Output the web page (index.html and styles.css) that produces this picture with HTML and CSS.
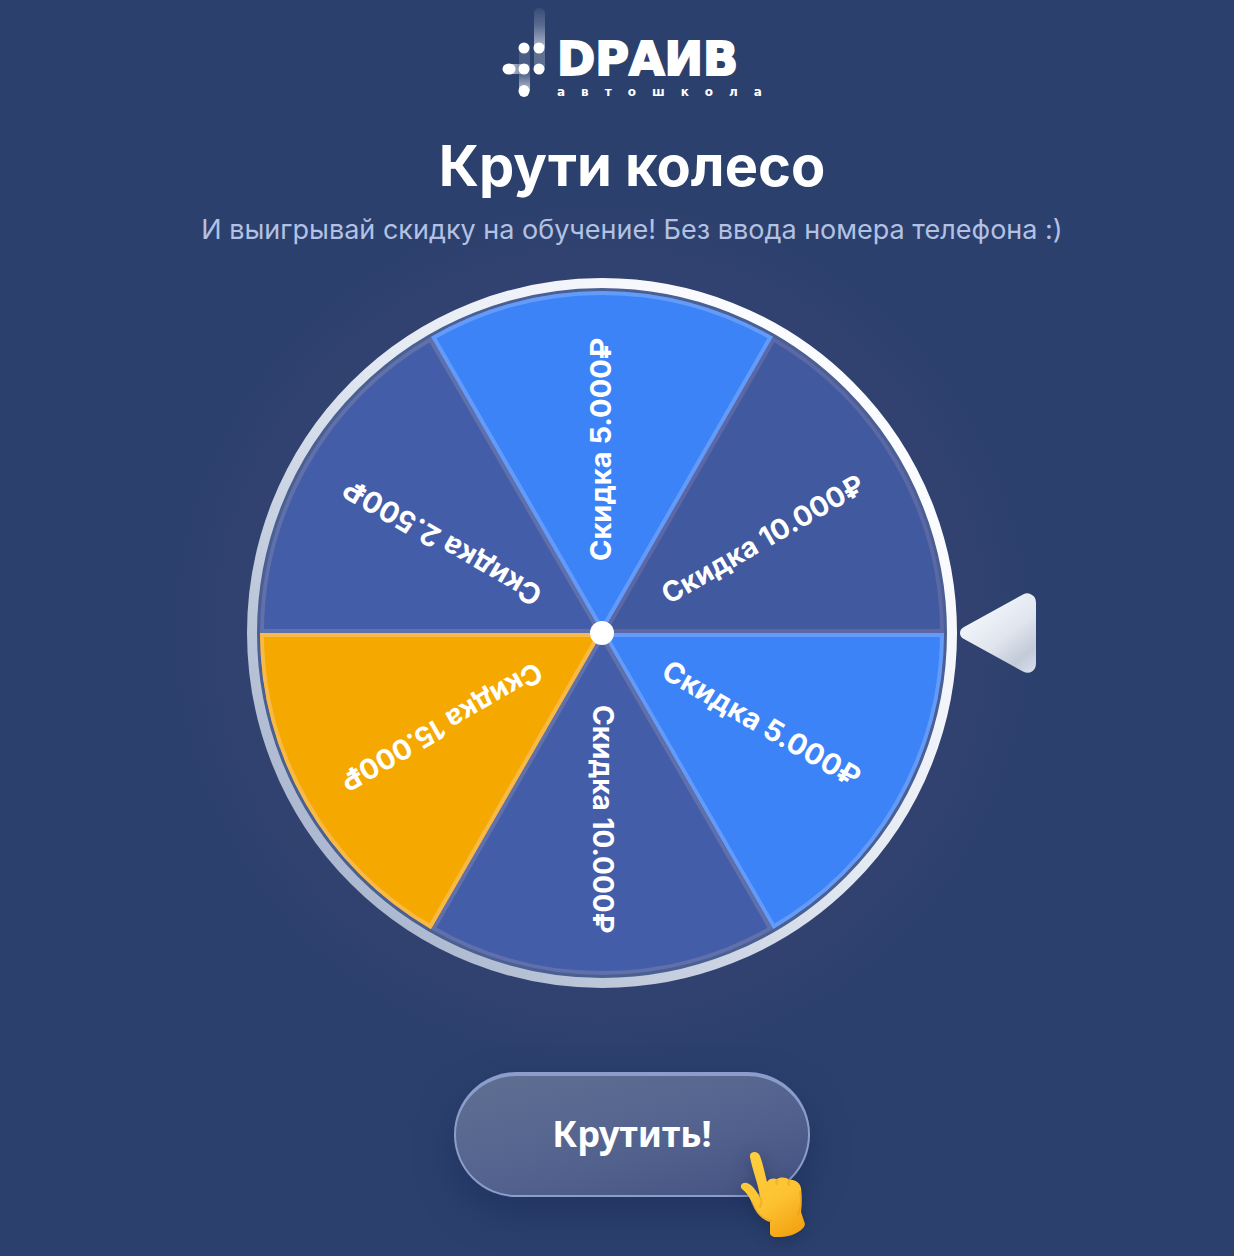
FILE: index.html
```html
<!DOCTYPE html>
<html lang="ru">
<head>
  <meta charset="UTF-8">
  <meta name="viewport" content="width=device-width, initial-scale=1">
  <title>Крути колесо</title>
  <link rel="stylesheet" href="styles.css">
</head>
<body>
  <main class="page">
    <header class="logo">
      <svg class="logo-mark" viewBox="0 0 44 90" width="44" height="90" aria-hidden="true">
        <defs>
          <linearGradient id="trail" x1="0" y1="0" x2="0" y2="1">
            <stop offset="0" stop-color="#fff" stop-opacity="0.06"/>
            <stop offset="0.4" stop-color="#dfe3f5" stop-opacity="0.25"/>
            <stop offset="1" stop-color="#fff" stop-opacity="0.7"/>
          </linearGradient>
          <linearGradient id="trail-side" x1="0" y1="0" x2="1" y2="0">
            <stop offset="0" stop-color="#fff" stop-opacity="0.7"/>
            <stop offset="1" stop-color="#fff" stop-opacity="0.15"/>
          </linearGradient>
        </defs>
        <rect x="32" y="0" width="11" height="42" rx="5" fill="url(#trail)"/>
        <rect x="32" y="38" width="11" height="24" fill="#fff" fill-opacity="0.25"/>
        <rect x="17" y="38" width="11" height="24" fill="#fff" fill-opacity="0.15"/>
        <rect x="17" y="56" width="11" height="27" fill="url(#trail)"/>
        <rect x="8" y="56" width="18" height="10" fill="url(#trail-side)"/>
        <g fill="#fff">
          <circle cx="22" cy="40" r="5.5"/>
          <circle cx="37" cy="40" r="5.5"/>
          <ellipse cx="7" cy="61" rx="6.5" ry="5.5"/>
          <circle cx="22" cy="61" r="5.5"/>
          <circle cx="37" cy="61" r="5.5"/>
          <ellipse cx="22" cy="83" rx="5.5" ry="6"/>
        </g>
      </svg>
      <div class="logo-text">
        <span class="logo-name">DРАИВ</span>
        <span class="logo-sub">автошкола</span>
      </div>
    </header>

    <h1 class="title">Крути колесо</h1>
    <p class="subtitle">И выигрывай скидку на обучение! Без ввода номера телефона :)</p>

    <div class="stage">
      <svg class="wheel" viewBox="-355 -355 710 710">
        <defs>
          <linearGradient id="rim" x1="0.85" y1="0.2" x2="0.15" y2="0.85">
            <stop offset="0" stop-color="#fbfcff"/>
            <stop offset="0.45" stop-color="#e3e9f2"/>
            <stop offset="1" stop-color="#adb9d0"/>
          </linearGradient>
          <!-- one sector, 60 degrees, pointing right -->
          <path id="sector" d="M0 0 L296.2 -171 A342 342 0 0 1 296.2 171 Z"/>
          <clipPath id="sector-clip"><use href="#sector"/></clipPath>
        </defs>
        <circle r="347" fill="#4a5f92"/>
        <circle r="350" fill="none" stroke="url(#rim)" stroke-width="10"/>
        <g transform="rotate(-30)">
          <use href="#sector" class="sector sector-navy-dark" clip-path="url(#sector-clip)"/>
          <text class="prize prize-long" x="72" y="9">Скидка 10.000₽</text>
        </g>
        <g transform="rotate(30)">
          <use href="#sector" class="sector sector-blue" clip-path="url(#sector-clip)"/>
          <text class="prize" x="72" y="9">Скидка 5.000₽</text>
        </g>
        <g transform="rotate(90)">
          <use href="#sector" class="sector sector-navy" clip-path="url(#sector-clip)"/>
          <text class="prize prize-long" x="72" y="9">Скидка 10.000₽</text>
        </g>
        <g transform="rotate(150)">
          <use href="#sector" class="sector sector-orange" clip-path="url(#sector-clip)"/>
          <text class="prize prize-long" x="72" y="9">Скидка 15.000₽</text>
        </g>
        <g transform="rotate(210)">
          <use href="#sector" class="sector sector-navy" clip-path="url(#sector-clip)"/>
          <text class="prize" x="72" y="9">Скидка 2.500₽</text>
        </g>
        <g transform="rotate(270)">
          <use href="#sector" class="sector sector-blue" clip-path="url(#sector-clip)"/>
          <text class="prize" x="72" y="9">Скидка 5.000₽</text>
        </g>
        <circle r="12" fill="#fff"/>
      </svg>
      <svg class="pointer" viewBox="0 0 76 80" width="76" height="80" aria-hidden="true">
        <defs>
          <linearGradient id="pointer-fill" x1="0.3" y1="0.2" x2="0.9" y2="1">
            <stop offset="0" stop-color="#f1f5fb"/>
            <stop offset="0.45" stop-color="#e0e5ee"/>
            <stop offset="0.8" stop-color="#c3cad8"/>
            <stop offset="1" stop-color="#d5dbe8"/>
          </linearGradient>
        </defs>
        <path d="M4 34 L63 1.500 Q68 -1 72 2 Q76 4 76 10 V70 Q76 76 72 78.500 Q68 81 63 78.500 L4 46 Q0 44 0 40 Q0 36 4 34 Z" fill="url(#pointer-fill)"/>
      </svg>
    </div>

    <div class="action">
      <button class="spin" type="button">Крутить!</button>
      <svg class="hand" viewBox="0 0 66 88" width="66" height="88" aria-hidden="true">
        <defs>
          <linearGradient id="skin" x1="0.2" y1="0" x2="0.7" y2="1">
            <stop offset="0" stop-color="#ffcf3f"/>
            <stop offset="0.6" stop-color="#fdc231"/>
            <stop offset="1" stop-color="#f4a414"/>
          </linearGradient>
        </defs>
        <path d="M10 7 C9 1 18 0 20 6 C23 14 25 24 27 32 C29 28 34 28 37 29 C41 27 46 27 49 30 C55 29 60 33 61 38 C62 46 62 54 61 62 L65 74 C64 81 50 88 36 87 C32 87 30 85 30 83 L30 72 C22 70 16 63 12 53 C9 46 6 42 2 39 C-1 36 2 32 7 33 C13 35 16 41 20 47 C18 33 12 19 10 7 Z" fill="url(#skin)"/>
        <path d="M20 47 C22 51 22 54 20 57 M37 30 C36 32 36 33 37 34 M49 31 C48 33 48 34 49 35 M60 42 C62 50 61 58 58 64 M12 52 C16 63 22 69 31 71" fill="none" stroke="#dc8f12" stroke-width="2" stroke-linecap="round" stroke-opacity="0.35"/>
      </svg>
    </div>
  </main>
</body>
</html>
```
FILE: styles.css
```css
* {
  box-sizing: border-box;
}

body {
  margin: 0;
  min-height: 100vh;
  background: #2b406d;
  font-family: Inter, "Liberation Sans", sans-serif;
  color: #fff;
}

.page {
  display: flex;
  flex-direction: column;
  align-items: center;
  padding: 8px 0 59px 30px;
}

/* logo */
.logo {
  display: flex;
  gap: 11px;
}

.logo-text {
  display: flex;
  flex-direction: column;
  padding-top: 30px;
  width: 205px;
}

.logo-name {
  font-family: "DejaVu Sans", sans-serif;
  font-size: 46px;
  font-weight: bold;
  line-height: 42px;
  -webkit-text-stroke: 2px #fff;
}

.logo-sub {
  font-family: "DejaVu Sans", sans-serif;
  font-size: 12px;
  font-weight: bold;
  line-height: 24px;
  letter-spacing: 16px;
  white-space: nowrap;
}

/* heading */
.title {
  margin: 26px 0 0;
  font-size: 56px;
  font-weight: 700;
  line-height: 72px;
}

.subtitle {
  margin: 10px 0 0;
  color: #b3c1e3;
  font-size: 27px;
  line-height: 36px;
}

/* wheel */
.stage {
  position: relative;
  width: 770px;
  max-width: 100%;
  margin-top: 30px;
  padding-right: 60px;
}

.stage::before {
  content: "";
  position: absolute;
  z-index: -1;
  top: -90px;
  left: -90px;
  width: 890px;
  height: 890px;
  border-radius: 50%;
  background: radial-gradient(closest-side, #324270 0%, #324270 82%, #2b406d00 100%);
}

.wheel {
  display: block;
  width: 100%;
  height: auto;
}

.sector {
  stroke-width: 8px;
}

.sector-blue {
  fill: #3c83f7;
  stroke: #649bf9;
}

.sector-navy {
  fill: #445da8;
  stroke: #6070aa;
}

.sector-navy-dark {
  fill: #41599e;
  stroke: #5c68a5;
}

.sector-orange {
  fill: #f5a900;
  stroke: #f7b948;
}

.prize {
  fill: #fff;
  font-size: 29px;
  font-weight: 700;
}

.prize-long {
  font-size: 28px;
}

.pointer {
  position: absolute;
  top: 50%;
  right: -19px;
  margin-top: -40px;
}

/* button */
.action {
  position: relative;
  margin-top: 84px;
}

.spin {
  display: block;
  width: 356px;
  height: 125px;
  padding: 0 0 4px;
  border: 2px solid #8c9ccb;
  border-top-width: 4px;
  border-radius: 63px;
  background: linear-gradient(165deg, #5f6f92 0%, #55648f 50%, #4a5987 80%, #43527f 100%);
  box-shadow: 0 16px 36px rgba(24, 40, 88, 0.5);
  color: #fff;
  font-family: "Noto Sans", sans-serif;
  font-size: 36px;
  font-weight: 700;
  cursor: pointer;
}

.hand {
  position: absolute;
  right: 4px;
  bottom: -41px;
  filter: drop-shadow(0 4px 8px rgba(20, 32, 70, 0.4));
  pointer-events: none;
}
```
